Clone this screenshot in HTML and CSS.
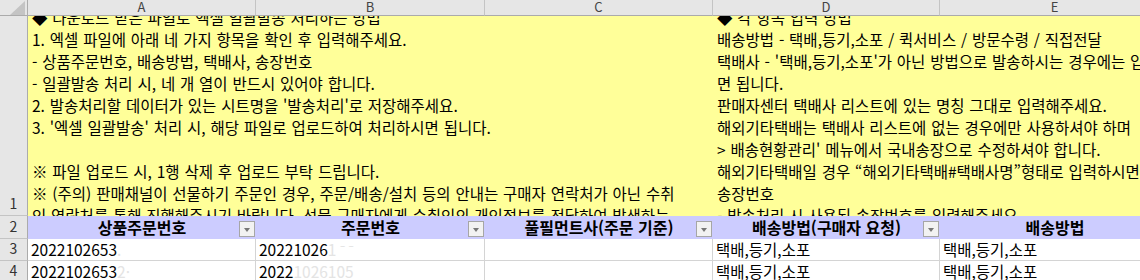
FILE: index.html
```html
<!DOCTYPE html>
<html lang="ko">
<head>
    <meta charset="UTF-8">
    <meta name="viewport" content="width=device-width, initial-scale=1.0">
    <title>엑셀 일괄발송</title>
    <link rel="stylesheet" href="styles.css">
</head>
<body>

<div class="sheet">
    <!-- column headers -->
    <div class="corner">
        <svg width="28" height="16" viewBox="0 0 28 16"><polygon points="10,15 25,15 25,1" fill="#c4c4c4"/></svg>
    </div>
    <div class="col-head">A</div>
    <div class="col-head">B</div>
    <div class="col-head">C</div>
    <div class="col-head">D</div>
    <div class="col-head">E</div>

    <!-- row 1: guide notes -->
    <div class="row-head">1</div>
    <div class="note note-left">
        <div class="note-text">
            <p>◆ 다운로드 받은 파일로 엑셀 일괄발송 처리하는 방법</p>
            <p>1. 엑셀 파일에 아래 네 가지 항목을 확인 후 입력해주세요.</p>
            <p>- 상품주문번호, 배송방법, 택배사, 송장번호</p>
            <p>- 일괄발송 처리 시, 네 개 열이 반드시 있어야 합니다.</p>
            <p>2. 발송처리할 데이터가 있는 시트명을 '발송처리'로 저장해주세요.</p>
            <p>3. '엑셀 일괄발송' 처리 시, 해당 파일로 업로드하여 처리하시면 됩니다.</p>
            <p>&nbsp;</p>
            <p>※ 파일 업로드 시, 1행 삭제 후 업로드 부탁 드립니다.</p>
            <p>※ (주의) 판매채널이 선물하기 주문인 경우, 주문/배송/설치 등의 안내는 구매자 연락처가 아닌 수취</p>
            <p>인 연락처를 통해 진행해주시기 바랍니다. 선물 구매자에게 수취인의 개인정보를 전달하여 발생하는</p>
        </div>
    </div>
    <div class="note note-right">
        <div class="note-text">
            <p>◆ 각 항목 입력 방법</p>
            <p>배송방법 - 택배,등기,소포 / 퀵서비스 / 방문수령 / 직접전달</p>
            <p>택배사 - '택배,등기,소포'가 아닌 방법으로 발송하시는 경우에는 입력하지 않으셔도 되</p>
            <p>면 됩니다.</p>
            <p>판매자센터 택배사 리스트에 있는 명칭 그대로 입력해주세요.</p>
            <p>해외기타택배는 택배사 리스트에 없는 경우에만 사용하셔야 하며</p>
            <p>&gt; 배송현황관리' 메뉴에서 국내송장으로 수정하셔야 합니다.</p>
            <p>해외기타택배일 경우 “해외기타택배#택배사명”형태로 입력하시면 됩니다.</p>
            <p>송장번호</p>
            <p>- 발송처리 시 사용된 송장번호를 입력해주세요.</p>
        </div>
    </div>

    <!-- row 2: table header -->
    <div class="row-head">2</div>
    <div class="th">상품주문번호<span class="filter"></span></div>
    <div class="th">주문번호<span class="filter"></span></div>
    <div class="th">풀필먼트사(주문 기준)<span class="filter"></span></div>
    <div class="th">배송방법(구매자 요청)<span class="filter"></span></div>
    <div class="th">배송방법<span class="filter"></span></div>

    <!-- data rows -->
    <div class="row-head">3</div>
    <div class="cell">2022102653<span class="faint">.</span></div>
    <div class="cell">20221026<span class="faint">1 ⁻ ⁻</span></div>
    <div class="cell"></div>
    <div class="cell">택배,등기,소포</div>
    <div class="cell">택배,등기,소포</div>

    <div class="row-head">4</div>
    <div class="cell">2022102653<span class="faint">2·</span></div>
    <div class="cell">2022<span class="faint">1026105</span></div>
    <div class="cell"></div>
    <div class="cell">택배,등기,소포</div>
    <div class="cell">택배,등기,소포</div>
</div>

</body>
</html>
```

FILE: styles.css
```css
body {
    margin: 0;
    padding: 0;
    width: 1140px;
    height: 280px;
    overflow: hidden;
    background: #ffffff;
    font-family: "Noto Sans CJK KR", "Noto Sans", sans-serif;
    color: #000;
}

.sheet {
    display: grid;
    grid-template-columns: 28px 228px 229px 228px 227px 230px;
    grid-template-rows: 16px 200px 23px 22px 22px;
    width: 1170px;
}

.sheet > div {
    box-sizing: border-box;
}

/* headers */
.corner {
    background: #e6e6e6;
    border-right: 1px solid #ababab;
    border-bottom: 1px solid #ababab;
    z-index: 2;
}

.corner svg {
    display: block;
}

.col-head {
    background: #e6e6e6;
    border-right: 1px solid #c4c4c4;
    border-bottom: 1px solid #ababab;
    color: #444;
    font-size: 13px;
    line-height: 14px;
    text-align: center;
    z-index: 2;
}

.row-head {
    background: #e6e6e6;
    border-right: 1px solid #ababab;
    border-bottom: 1px solid #c4c4c4;
    color: #333;
    font-size: 14px;
    line-height: 16px;
    display: flex;
    justify-content: center;
    align-items: flex-end;
    padding-bottom: 4px;
}

/* row 1 notes */
.note {
    grid-column: span 3;
    background: #ffff99;
    overflow: hidden;
    white-space: nowrap;
}

.note-right {
    grid-column: span 2;
}

.note-text {
    margin-top: -10px;
    padding-left: 4px;
    font-size: 15.5px;
    word-spacing: 0.5px;
}

.note-text p {
    margin: 0;
    height: 22px;
    line-height: 22px;
}

/* row 2 table header */
.th {
    position: relative;
    background: #ccccff;
    font-size: 16px;
    font-weight: bold;
    line-height: 23px;
    text-align: center;
    white-space: nowrap;
}

.filter {
    position: absolute;
    right: 1px;
    top: 5px;
    width: 16px;
    height: 16px;
    box-sizing: border-box;
    border: 1px solid #a6a6a6;
    background: #f2f2f2;
}

.filter::after {
    content: "";
    position: absolute;
    left: 4px;
    top: 6px;
    border-left: 3.5px solid transparent;
    border-right: 3.5px solid transparent;
    border-top: 4px solid #777;
}

/* data cells */
.cell {
    border-right: 1px solid #d4d4d4;
    border-bottom: 1px solid #d4d4d4;
    font-size: 15.5px;
    line-height: 21px;
    padding-left: 3px;
    white-space: nowrap;
    overflow: hidden;
}

.faint {
    color: #e4e4e4;
}
```
